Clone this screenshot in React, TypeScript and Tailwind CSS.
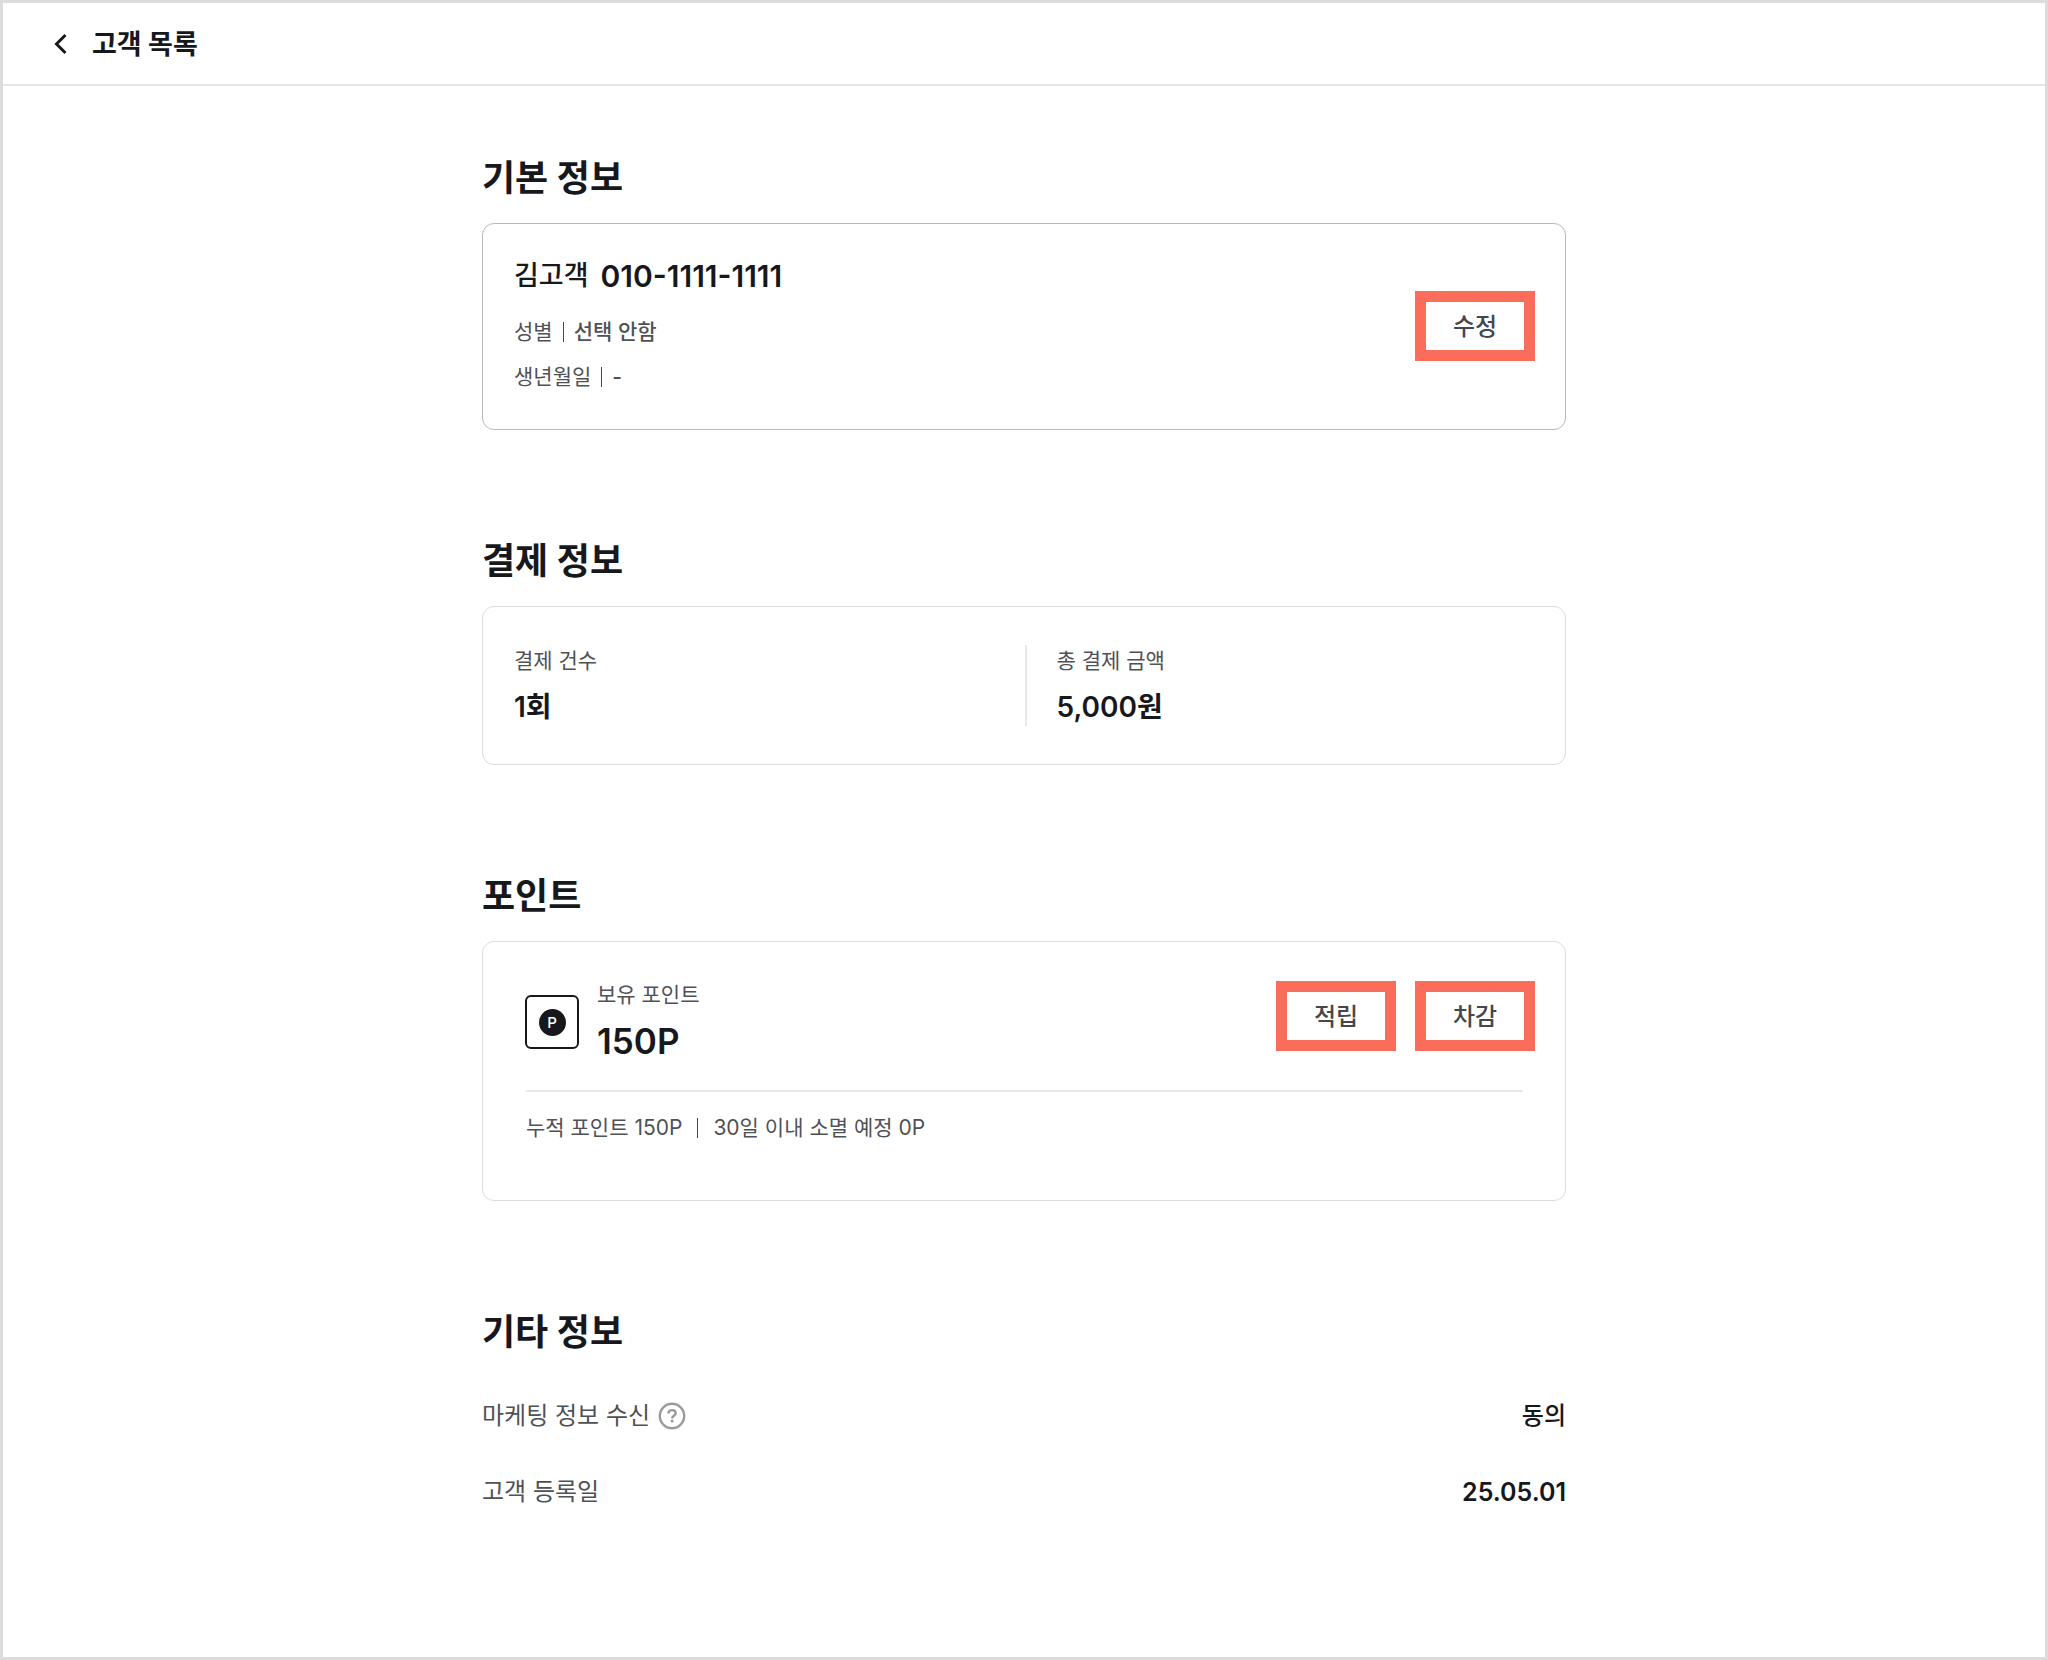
import type { ReactNode } from "react";

function Section({ title, children }: { title: string; children: ReactNode }) {
  return (
    <section>
      <h2 className="mb-[21px] text-[36px] leading-[48px] font-bold">{title}</h2>
      {children}
    </section>
  );
}

function ActionButton({ children }: { children: ReactNode }) {
  return (
    <button type="button" className="h-[70px] w-[120px] shrink-0 border-[11px] border-[#fa6d5b] bg-white pt-[2px] text-[24px] leading-[36px] font-medium text-[#46474c]">
      {children}
    </button>
  );
}

function Bar() {
  return <span className="h-5 w-px bg-[#46474c]" />;
}

export default function App() {
  return (
    <div className="min-h-screen border-[3px] border-[#dcdcdc] bg-white font-[Inter,'Noto_Sans_CJK_KR',sans-serif] text-[#17181c]">
      <header className="flex h-[83px] items-center border-b-2 border-[#e6e6e6] px-[48px]">
        <a href="#customers" className="flex items-center gap-[23px]">
          <svg width="18" height="24" viewBox="0 0 18 24" fill="none" stroke="currentColor" strokeWidth="3">
            <path d="M14.5 3 5.5 12l9 9" />
          </svg>
          <h1 className="pt-[2px] text-[27px] leading-[36px] font-bold">고객 목록</h1>
        </a>
      </header>

      <main className="mx-auto flex max-w-[1084px] flex-col gap-[107px] pt-[68px] pb-20">
        <Section title="기본 정보">
          <div className="flex items-center justify-between rounded-xl border border-[#b9b9be] pt-[34px] pr-[30px] pb-[36px] pl-[31px]">
            <div className="text-[21px] leading-[32px] text-[#505156]">
              <p className="mb-[22px] flex items-center gap-[12px] leading-[36px] text-[#17181c]">
                <span className="text-[27px] font-medium">김고객</span>
                <span className="text-[30px] font-semibold">010-1111-1111</span>
              </p>
              <p className="mb-[13px] flex items-center gap-[10px]">
                <span>성별</span>
                <Bar />
                <span className="font-medium">선택 안함</span>
              </p>
              <p className="flex items-center gap-[10px]">
                <span>생년월일</span>
                <Bar />
                <span className="font-medium">-</span>
              </p>
            </div>
            <ActionButton>수정</ActionButton>
          </div>
        </Section>

        <Section title="결제 정보">
          <dl className="grid grid-cols-2 rounded-xl border border-[#dcdcdf] py-[38px] pr-[30px] pl-[31px]">
            <div className="pb-px">
              <dt className="mb-[12px] text-[21px] leading-[32px] text-[#505156]">결제 건수</dt>
              <dd className="text-[28px] leading-[36px] font-semibold">1회</dd>
            </div>
            <div className="border-l-2 border-[#e8e8ea] pb-px pl-[30px]">
              <dt className="mb-[12px] text-[21px] leading-[32px] text-[#505156]">총 결제 금액</dt>
              <dd className="text-[28px] leading-[36px] font-semibold">5,000원</dd>
            </div>
          </dl>
        </Section>

        <Section title="포인트">
          <div className="rounded-xl border border-[#dcdcdf] pt-[39px] pr-[30px] pb-[56px] pl-[31px]">
            <div className="flex items-start justify-between">
              <div className="flex items-center gap-[18px] pl-[11px]">
                <div className="flex size-[54px] items-center justify-center rounded-md border-2 border-[#17181c]">
                  <span className="flex size-[27px] items-center justify-center rounded-full bg-[#17181c] text-[15px] leading-none font-medium text-white">P</span>
                </div>
                <div>
                  <p className="mb-[10px] text-[21px] leading-[28px] text-[#505156]">보유 포인트</p>
                  <p className="text-[35px] leading-[44px] font-semibold">150P</p>
                </div>
              </div>
              <div className="flex gap-[19px]">
                <ActionButton>적립</ActionButton>
                <ActionButton>차감</ActionButton>
              </div>
            </div>
            <hr className="mx-[12px] mt-[27px] mb-[20px] border-t-2 border-[#e8e8ea]" />
            <p className="flex items-center gap-[15px] pl-[12px] text-[21px] leading-[32px] text-[#505156]">
              <span>누적 포인트 150P</span>
              <Bar />
              <span>30일 이내 소멸 예정 0P</span>
            </p>
          </div>
        </Section>

        <Section title="기타 정보">
          <dl className="flex flex-col gap-[40px] pt-[21px] text-[24px] leading-[36px]">
            <div className="flex justify-between">
              <dt className="flex items-center gap-[8px] text-[#505156]">
                마케팅 정보 수신
                <button type="button" aria-label="도움말">
                  <svg width="28" height="28" viewBox="0 0 28 28" fill="none" stroke="#9a9a9a" strokeWidth="2.4">
                    <circle cx="14" cy="14" r="12.2" />
                    <path d="M10.4 11.6c0-2.1 1.5-3.5 3.7-3.5s3.6 1.3 3.6 3.1c0 2.6-3.6 2.5-3.6 5.2" />
                    <circle cx="14.1" cy="19" r="1.5" fill="#9a9a9a" stroke="none" />
                  </svg>
                </button>
              </dt>
              <dd className="font-medium">동의</dd>
            </div>
            <div className="flex justify-between">
              <dt className="text-[#505156]">고객 등록일</dt>
              <dd className="text-[25px] font-semibold">25.05.01</dd>
            </div>
          </dl>
        </Section>
      </main>
    </div>
  );
}
